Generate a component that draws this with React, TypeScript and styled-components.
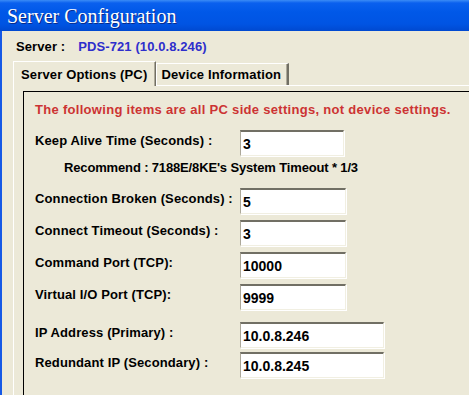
import React from 'react'
import styled, { createGlobalStyle } from 'styled-components'

const GlobalStyle = createGlobalStyle`
  html, body {
    margin: 0;
    padding: 0;
    background: #ece9d8;
  }
  body {
    font-family: "Liberation Sans", Arial, sans-serif;
  }
`

const Window = styled.div`
  width: 469px;
  height: 395px;
  overflow: hidden;
  display: flex;
  flex-direction: column;
  background: #ece9d8;
`

const TitleBar = styled.div`
  height: 31px;
  flex-shrink: 0;
  display: flex;
  align-items: center;
  padding-left: 7px;
  background: linear-gradient(to bottom, #3b8cf6 0px, #0a60ee 3px, #0058e8 12px, #0054e3 24px, #0049d0 31px);
`

const Title = styled.span`
  font-family: "Liberation Serif", "Times New Roman", serif;
  font-size: 20px;
  color: #fff;
  text-shadow: 1px 1px 0 #0a2a88;
  margin-top: 2px;
`

const Frame = styled.div`
  flex: 1;
  display: flex;
  flex-direction: column;
  border-left: 2px solid #1659e6;
  width: 560px;
`

const ServerRow = styled.div`
  display: flex;
  gap: 13px;
  padding: 8px 0 0 14px;
  height: 16px;
  line-height: 16px;
  font-size: 13px;
  font-weight: bold;
  letter-spacing: 0.1px;
`

const ServerName = styled.span`
  color: #2e2ecc;
`

const TabStrip = styled.div`
  display: flex;
  align-items: flex-end;
  margin: 6px 0 0 11px;
  height: 24px;
  position: relative;
  z-index: 1;
`

const Tab = styled.div<{ $active?: boolean }>`
  height: 22px;
  box-sizing: border-box;
  display: flex;
  align-items: center;
  padding: ${p => (p.$active ? '0 8px 0 7px' : '0 6px 0 4px')};
  font-size: 13px;
  font-weight: bold;
  letter-spacing: 0.15px;
  background: #ece9d8;
  border-top: 1px solid #fff;
  border-left: 1px solid #fff;
  border-right: 1px solid #716f64;
  box-shadow: inset -1px 0 0 #aca899;
  ${p => (p.$active ? 'margin-bottom: -1px; height: 25px;' : 'border-right-width: 2px;')}
`

const Panel = styled.div`
  flex: 1;
  margin-left: 11px;
  border-top: 1px solid #fff;
  border-left: 1px solid #fff;
  padding: 5px 0 0 9px;
`

const GroupBox = styled.div`
  border-top: 1px solid #000;
  border-left: 1px solid #000;
  height: 400px;
  padding: 10px 0 0 11px;
  display: flex;
  flex-direction: column;
`

const Note = styled.div`
  color: #cc3333;
  font-size: 13px;
  font-weight: bold;
  letter-spacing: 0.3px;
  line-height: 16px;
  white-space: nowrap;
`

const Row = styled.div<{ $top: number }>`
  display: flex;
  align-items: center;
  margin-top: ${p => p.$top}px;
`

const Label = styled.span`
  width: 205px;
  flex-shrink: 0;
  font-size: 13px;
  font-weight: bold;
  letter-spacing: 0.12px;
  white-space: nowrap;
  padding-bottom: 5px;
`

const Hint = styled.div`
  margin: 4px 0 0 29px;
  font-size: 13px;
  font-weight: bold;
  letter-spacing: -0.15px;
  line-height: 16px;
  white-space: nowrap;
`

const Field = styled.input<{ $w: number }>`
  width: ${p => p.$w}px;
  height: 26px;
  box-sizing: border-box;
  margin: 0;
  padding: 0 0 0 2px;
  background: #fff;
  border-style: solid;
  border-width: 2px 1px 1px 1px;
  border-color: #716f64 #f1efe2 #f1efe2 #aca899;
  box-shadow: 1px 1px 0 #fff;
  font-family: "Liberation Sans", Arial, sans-serif;
  font-size: 14px;
  font-weight: bold;
  color: #000;
  outline: none;
`

const fields = [
  { label: 'Keep Alive Time (Seconds) :', value: '3', w: 104, top: 12 },
  { label: 'Connection Broken (Seconds) :', value: '5', w: 106, top: 12 },
  { label: 'Connect Timeout (Seconds) :', value: '3', w: 106, top: 6 },
  { label: 'Command Port (TCP):', value: '10000', w: 106, top: 6 },
  { label: 'Virtual I/O Port (TCP):', value: '9999', w: 106, top: 6 },
  { label: 'IP Address (Primary) :', value: '10.0.8.246', w: 144, top: 12 },
  { label: 'Redundant IP (Secondary) :', value: '10.0.8.245', w: 144, top: 4 },
]

const FieldRow: React.FC<{ label: string; value: string; w: number; top: number }> = ({ label, value, w, top }) => (
  <Row $top={top}>
    <Label>{label}</Label>
    <Field $w={w} defaultValue={value} />
  </Row>
)

const App: React.FC = () => {
  return (
    <Window>
      <GlobalStyle />
      <TitleBar>
        <Title>Server Configuration</Title>
      </TitleBar>
      <Frame>
        <ServerRow>
          <span>Server :</span>
          <ServerName>PDS-721 (10.0.8.246)</ServerName>
        </ServerRow>
        <TabStrip>
          <Tab $active>Server Options (PC)</Tab>
          <Tab>Device Information</Tab>
        </TabStrip>
        <Panel>
          <GroupBox>
            <Note>The following items are all PC side settings, not device settings.</Note>
            <FieldRow {...fields[0]} />
            <Hint>Recommend : 7188E/8KE's System Timeout * 1/3</Hint>
            {fields.slice(1).map(f => (
              <FieldRow key={f.label} {...f} />
            ))}
          </GroupBox>
        </Panel>
      </Frame>
    </Window>
  )
}

export default App
